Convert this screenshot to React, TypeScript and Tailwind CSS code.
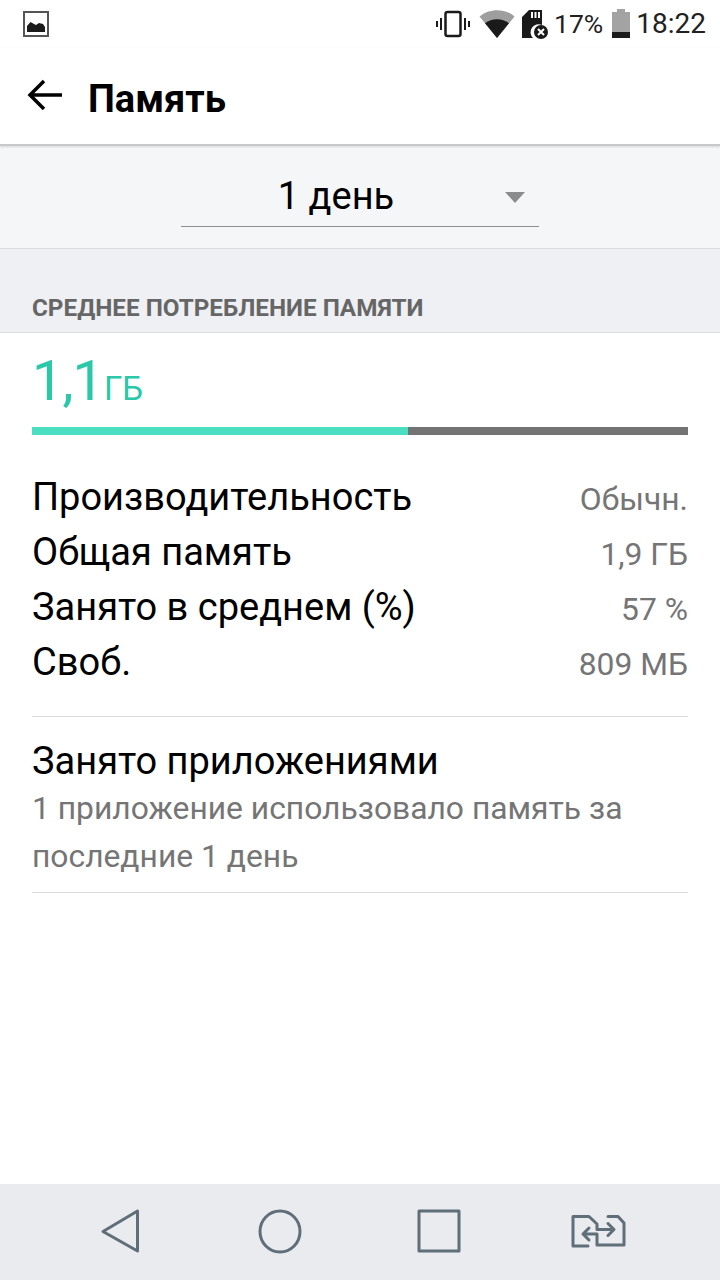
import React from "react";

const rows = [
  ["Производительность", "Обычн."],
  ["Общая память", "1,9 ГБ"],
  ["Занято в среднем (%)", "57 %"],
  ["Своб.", "809 МБ"],
];

function StatusBar() {
  return (
    <div className="h-[48px] flex items-center justify-between pl-[23px] pr-[14px] bg-white">
      <svg width="26" height="26" viewBox="0 0 26 26">
        <rect x="1" y="1" width="24" height="24" fill="none" stroke="#555" strokeWidth="2" />
        <path d="M4 21 V15 L7.500 11 L11 13 L13 14 L16 12 L20 13 L22 16 V21 Z" fill="#1a1a1a" />
      </svg>
      <div className="flex items-center text-[#212121]">
        <svg width="36" height="28" viewBox="0 0 36 28" className="mr-[7px]">
          <rect x="9.500" y="2" width="15" height="24" rx="2" fill="none" stroke="#1a1a1a" strokeWidth="2.500" />
          <path d="M1 11 V17 M5 8 V20 M29 8 V20 M33 11 V17" stroke="#1a1a1a" strokeWidth="2" />
        </svg>
        <svg width="36" height="30" viewBox="0 0 36 30" className="mr-[6px]">
          <path d="M0.500 7.500 C10 -1 26 -1 35.500 7.500 L18 29 Z" fill="#9e9e9e" />
          <path d="M6 14.300 C13 9 23 9 30 14.300 L18 29 Z" fill="#1a1a1a" />
        </svg>
        <svg width="28" height="30" viewBox="0 0 28 30" className="mr-[5px]">
          <path d="M8 1 H21 V16 A8 8 0 0 0 12 29 H1 V8 Z" fill="#1a1a1a" />
          <path d="M11 3 V9 M14.500 3 V9 M18 3 V9" stroke="#fff" strokeWidth="2" />
          <circle cx="20" cy="23" r="7" fill="#1a1a1a" />
          <path d="M17 20 L23 26 M23 20 L17 26" stroke="#fff" strokeWidth="2" />
        </svg>
        <span className="text-[26.500px] leading-[30px] mr-[9px] font-['Roboto',sans-serif]">17%</span>
        <svg width="18" height="30" viewBox="0 0 18 30" className="mr-[6px]">
          <path d="M5 0 H13 V3 H18 V29 H0 V3 H5 Z" fill="#a3a3a3" />
          <rect x="0" y="23" width="18" height="6" fill="#1a1a1a" />
        </svg>
        <span className="text-[28px] leading-[30px] font-['Roboto',sans-serif]">18:22</span>
      </div>
    </div>
  );
}

export default function App() {
  return (
    <div className="w-[720px] h-[1280px] flex flex-col bg-white font-['Roboto',sans-serif] overflow-hidden">
      <StatusBar />
      <div className="h-[98px] flex items-center bg-white border-b-[2px] border-[#c8c9cb] relative z-10 shadow-[0_1px_2px_rgba(0,0,0,0.12)]">
        <svg width="36" height="32" viewBox="0 0 36 32" className="ml-[27px] mb-[2px]">
          <path d="M35 16 H3 M17 2 L3 16 L17 30" fill="none" stroke="#000" strokeWidth="3.500" />
        </svg>
        <span className="ml-[25px] text-[38px] font-bold text-black leading-none pt-[6px]">Память</span>
      </div>
      <div className="h-[103px] bg-[#f5f6f8] border-b border-[#dcdcdc] flex justify-center">
        <div className="w-[358px] h-[81px] border-b border-[#8e8e8e] relative flex items-center justify-center pt-[19px] pr-[48px]">
          <span className="text-[38px] text-black leading-none">1 день</span>
          <div className="absolute left-[324px] top-[46px] w-0 h-0 border-l-[10px] border-r-[10px] border-t-[11px] border-l-transparent border-r-transparent border-t-[#8c8c8c]" />
        </div>
      </div>
      <div className="h-[84px] bg-[#eef0f3] border-b border-[#dcdcdc] flex items-end pl-[32px] pb-[9px]">
        <span className="text-[24.250px] font-bold text-[#666666] leading-[30px]">СРЕДНЕЕ ПОТРЕБЛЕНИЕ ПАМЯТИ</span>
      </div>
      <div className="px-[32px] flex-1 flex flex-col">
        <div className="h-[67px] flex items-end text-[#2ac7a9] mt-[15px]">
          <span className="text-[56px] leading-[67px] tracking-[-1px]">1,1</span>
          <span className="text-[33px] leading-[52px] ml-[1px]">ГБ</span>
        </div>
        <div className="flex h-[8px] mt-[12px]">
          <div className="w-[376px] bg-[#4adfc0]" />
          <div className="flex-1 bg-[#737373]" />
        </div>
        <div className="mt-[34px] pb-[27px] border-b border-[#dcdcdc]">
          {rows.map(([label, value]) => (
            <div key={label} className="h-[55px] flex items-center justify-between">
              <span className="text-[38px] text-black leading-none">{label}</span>
              <span className="text-[31.800px] text-[#757575] leading-none pt-[6px]">{value}</span>
            </div>
          ))}
        </div>
        <div className="border-b border-[#dcdcdc] pt-[22px] pb-[12px]">
          <div className="text-[38px] text-black leading-[45px]">Занято приложениями</div>
          <div className="text-[31.800px] text-[#757575] leading-[48px]">
            1 приложение использовало память за
            <br />
            последние 1 день
          </div>
        </div>
      </div>
      <div className="h-[96px] bg-[#e9ebee] flex items-center">
        <svg width="720" height="96" viewBox="0 0 720 96" fill="none" stroke="#5f6e78" strokeWidth="3" strokeLinejoin="round" strokeLinecap="round">
          <path d="M137.500 27 V67 L103 47.500 Z" />
          <ellipse cx="280" cy="47.500" rx="20" ry="20.500" />
          <rect x="419" y="27" width="40" height="40" />
          <path d="M588 62 H573 V32.500 H589 L597 40 V45.500 H613 M608 39.500 L614 45.500 L608 51.500" strokeWidth="3" />
          <path d="M608 32.500 H618 L624 39 V61 H597 V50 H583 M589 44 L583 50 L589 56" strokeWidth="3" />
        </svg>
      </div>
    </div>
  );
}
